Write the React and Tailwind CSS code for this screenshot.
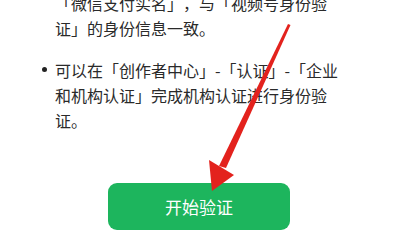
import React from 'react'

const Arrow = () => (
  <svg
    className="pointer-events-none absolute left-0 top-0"
    width="398"
    height="235"
    viewBox="0 0 398 235"
  >
    <polygon points="288,24 290.5,25 226,168 219,166" fill="#e3221d" />
    <polygon points="209,160 234,175 212,191" fill="#e3221d" />
  </svg>
)

// full-width punctuation box, keeps the font from squeezing it
const P = ({ children }) => <span className="inline-block w-[16px]">{children}</span>

const Bullet = ({ children }) => (
  <div className="flex">
    <div className="w-[55px] shrink-0 flex justify-end pr-[8px] pt-[9px]">
      <span className="block h-[5px] w-[5px] rounded-full bg-[#222]" />
    </div>
    <div>{children}</div>
  </div>
)

export default function App() {
  return (
    <div
      className="relative h-[235px] w-[398px] overflow-hidden bg-white text-[#2a2a2a]"
      style={{ fontFamily: '"Noto Sans CJK SC", "Noto Sans", sans-serif' }}
    >
      <div className="-mt-[9px] text-[16px] leading-[25px]">
        <div className="pl-[55px] whitespace-nowrap">
          <P>「</P>微信支付实名<P>」</P><P>，</P>与<P>「</P>视频号身份验
          <br />
          证<P>」</P>的身份信息一致。
        </div>
        <div className="mt-[17px] whitespace-nowrap">
          <Bullet>
            可以在「创作者中心」-「认证」-「企业
            <br />
            和机构认证」完成机构认证进行身份验
            <br />
            证。
          </Bullet>
        </div>
      </div>
      <div className="mt-[50px] flex justify-center">
        <button className="flex h-[47px] w-[182px] items-center justify-center rounded-[9px] bg-[#1db55d] text-[17px] text-white">
          开始验证
        </button>
      </div>
      <Arrow />
    </div>
  )
}
